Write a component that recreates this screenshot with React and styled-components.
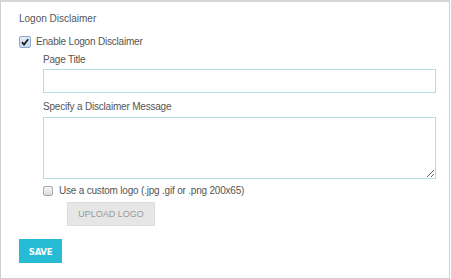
import React from "react";
import styled, { createGlobalStyle } from "styled-components";

const Global = createGlobalStyle`
  html, body { margin: 0; padding: 0; background: #fff; }
  body { font-family: "Liberation Sans", Arial, sans-serif; }
`;

const Panel = styled.div`
  box-sizing: border-box;
  width: 450px;
  height: 279px;
  border: 1px solid #cfcfcf;
  border-top: 2px solid #d6d6d6;
  padding: 11px 0 0 18px;
  background: #fff;
  color: #555;
  font-size: 10px;
  line-height: 12px;
`;

const Title = styled.div`
  font-size: 10px;
  line-height: 12px;
  color: #555;
  margin-bottom: 11px;
`;

const CheckRow = styled.label`
  display: flex;
  align-items: center;
  gap: ${(p) => p.$gap || 5}px;
  height: 12px;
  margin-left: ${(p) => p.$indent || 0}px;
  margin-top: ${(p) => p.$top || 0}px;
  color: #555;
  letter-spacing: -0.2px;
`;

const Box = styled.span`
  box-sizing: border-box;
  flex: none;
  width: ${(p) => p.$size}px;
  height: ${(p) => p.$size}px;
  border-radius: 2px;
  display: inline-flex;
  align-items: center;
  justify-content: center;
  border: 1px solid ${(p) => (p.$checked ? "#8ea8cf" : "#a8a8a8")};
  background: ${(p) =>
    p.$checked
      ? "linear-gradient(#e2ebf7, #c9d9ee)"
      : "linear-gradient(#f6f6f6, #dcdcdc)"};
`;

const Indented = styled.div`
  margin-left: 24px;
  width: 393px;
`;

const Label = styled.div`
  line-height: 12px;
  letter-spacing: -0.2px;
  margin-top: ${(p) => p.$top || 0}px;
  margin-bottom: ${(p) => p.$bottom || 0}px;
`;

const TextInput = styled.input`
  box-sizing: border-box;
  display: block;
  width: 393px;
  height: 24px;
  border: 1px solid #b4dee6;
  outline: none;
  margin: 0;
  padding: 0 4px;
`;

const TextArea = styled.textarea`
  box-sizing: border-box;
  display: block;
  width: 393px;
  height: 62px;
  border: 1px solid #b4dee6;
  outline: none;
  margin: 0;
  padding: 4px;
  resize: vertical;
`;

const UploadButton = styled.button`
  box-sizing: border-box;
  display: block;
  margin: 5px 0 0 48px;
  width: 88px;
  height: 24px;
  background: #e6e6e6;
  border: 1px solid #dcdcdc;
  color: #9a9a9a;
  font-family: "Liberation Sans", Arial, sans-serif;
  font-size: 9px;
  padding: 0;
`;

const SaveButton = styled.button`
  box-sizing: border-box;
  display: block;
  margin-top: 13px;
  width: 43px;
  height: 24px;
  background: #26bcd5;
  border: none;
  color: #fff;
  font-family: "DejaVu Sans Condensed", "DejaVu Sans", sans-serif;
  font-stretch: condensed;
  font-weight: bold;
  font-size: 9.5px;
  letter-spacing: -0.3px;
  padding: 0;
`;

const Check = () => (
  <svg width="8" height="8" viewBox="0 0 8 8">
    <path d="M0.9 4.2 L3 6.6 L7.2 1.2" fill="none" stroke="#1e1e1e" strokeWidth="1.8" />
  </svg>
);

export default function App() {
  return (
    <>
      <Global />
      <Panel>
        <Title>Logon Disclaimer</Title>
        <CheckRow>
          <Box $checked $size={12}>
            <Check />
          </Box>
          Enable Logon Disclaimer
        </CheckRow>
        <Indented>
          <Label $top={6} $bottom={3}>Page Title</Label>
          <TextInput type="text" />
          <Label $top={8} $bottom={4}>Specify a Disclaimer Message</Label>
          <TextArea />
        </Indented>
        <CheckRow $indent={24} $top={6} $gap={6}>
          <Box $size={10} />
          Use a custom logo (.jpg .gif or .png 200x65)
        </CheckRow>
        <UploadButton>UPLOAD LOGO</UploadButton>
        <SaveButton>SAVE</SaveButton>
      </Panel>
    </>
  );
}
